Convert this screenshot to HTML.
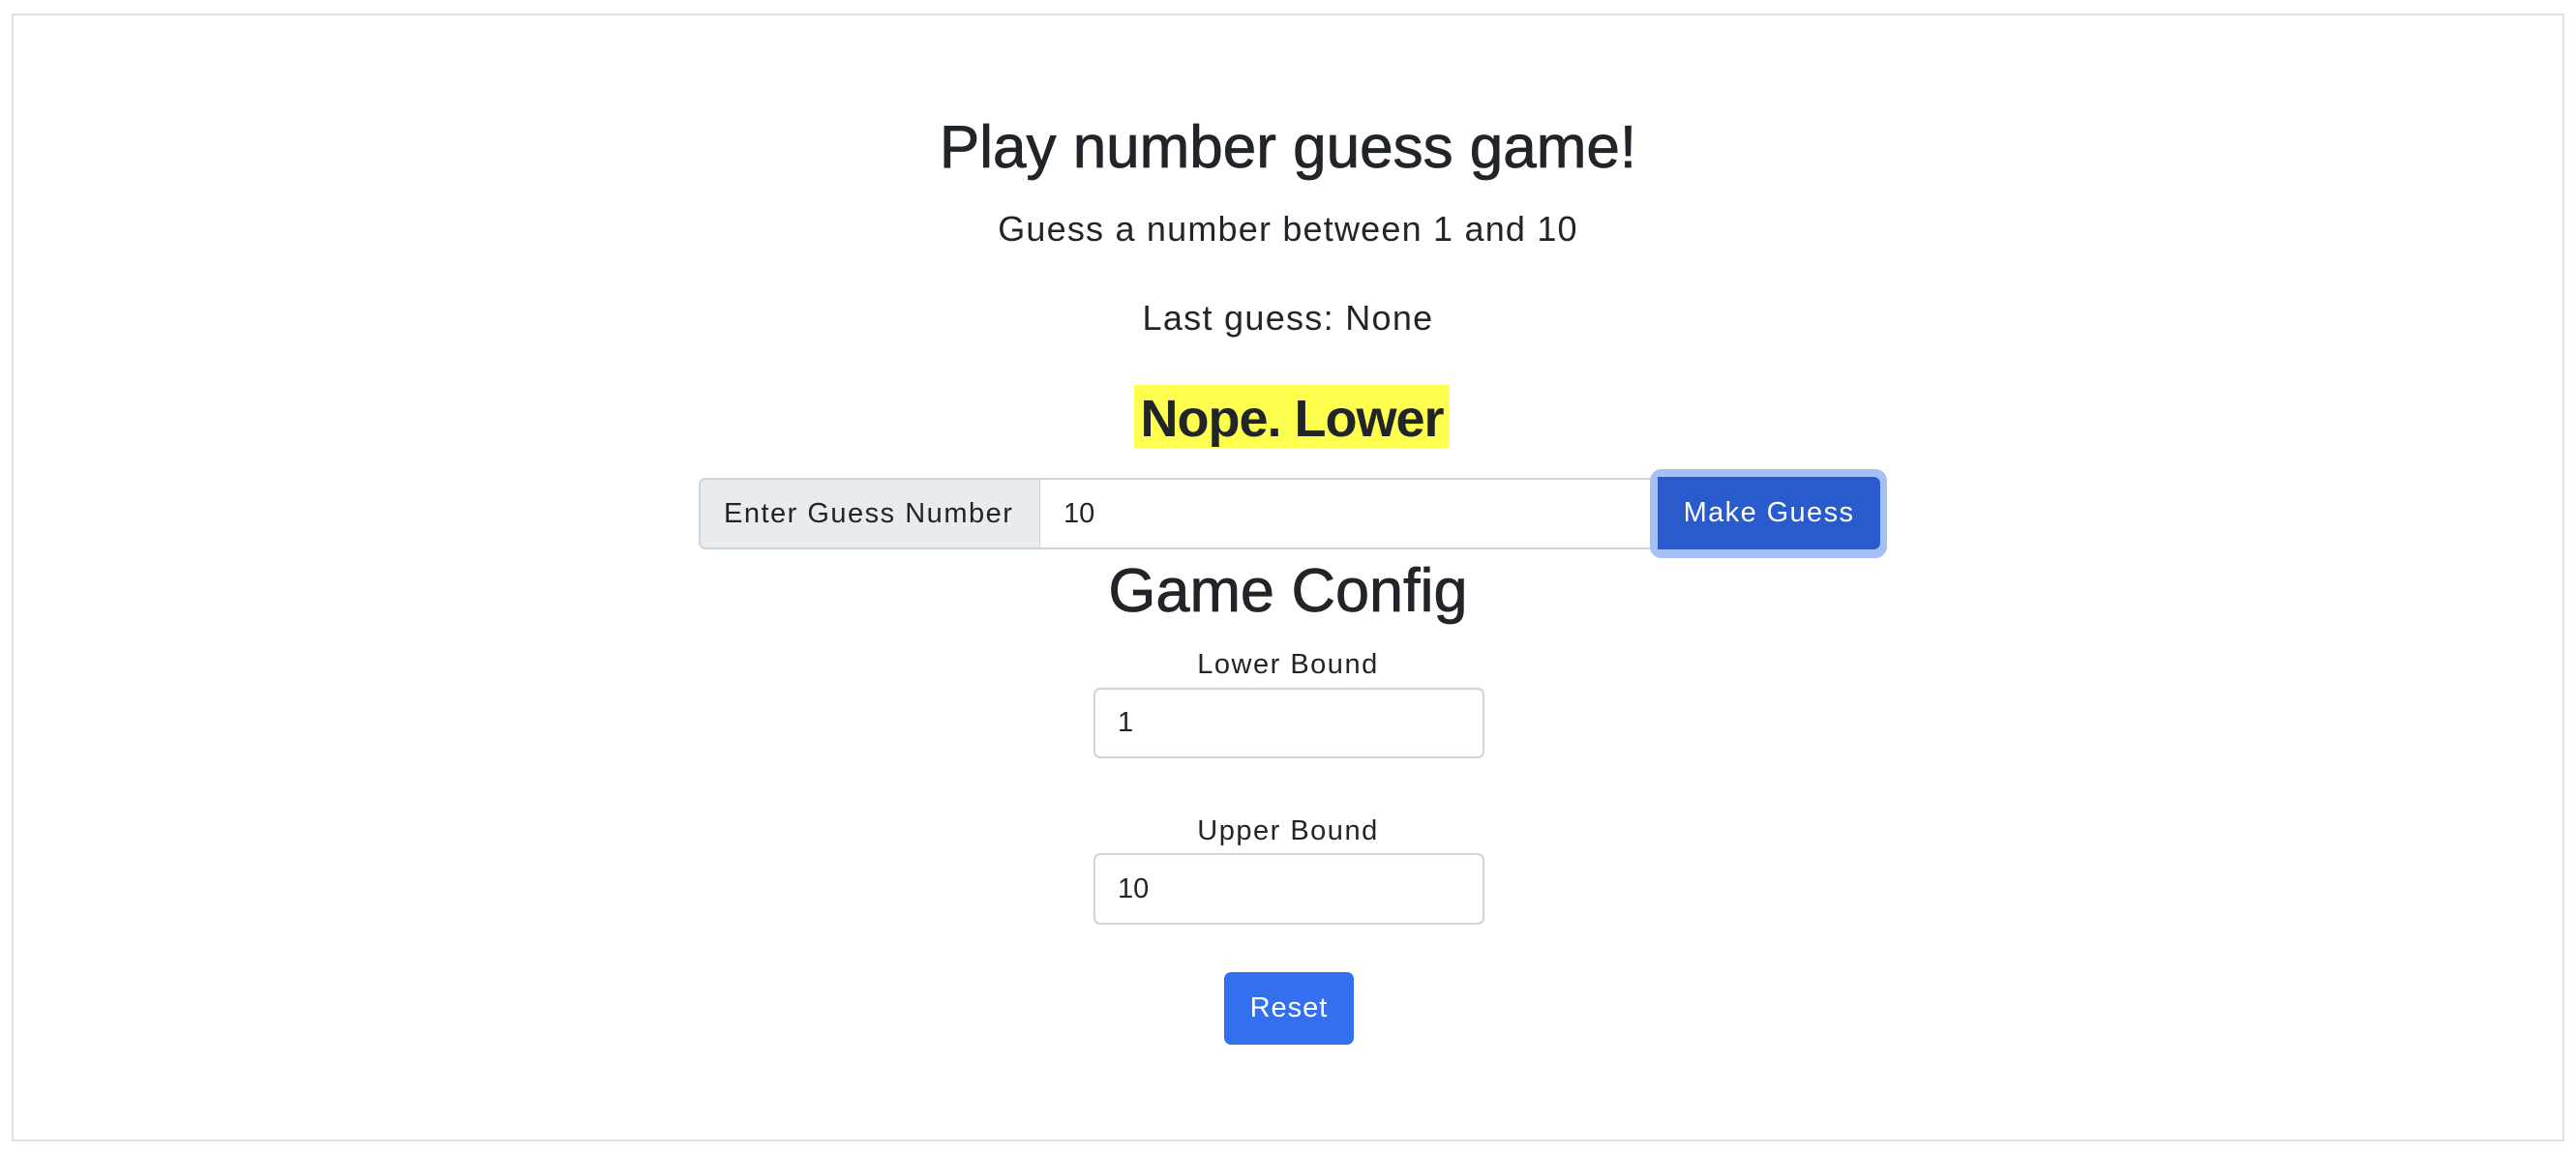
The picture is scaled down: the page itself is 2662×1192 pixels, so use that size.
<!DOCTYPE html>
<html><head><meta charset="utf-8"><style>
*{box-sizing:border-box;margin:0;padding:0}
body{width:2662px;height:1192px;background:#fff;position:relative;overflow:hidden;font-family:"Liberation Sans",Arial,sans-serif;color:#212529}
.frame{position:absolute;left:12px;top:14px;width:2638px;height:1166px;border:2px solid #dee2e6}
.c{position:absolute;left:0;width:2662px;text-align:center;line-height:1;white-space:nowrap}
.box{position:absolute}
.h{-webkit-text-stroke:0.8px #212529}
</style></head><body>
<div class="frame"></div>
<div class="c h" style="top:122px;font-size:62px">Play number guess game!</div>
<div class="c" style="top:219px;font-size:36px;letter-spacing:1.2px">Guess a number between 1 and 10</div>
<div class="c" style="top:311px;font-size:36px;letter-spacing:1.3px">Last guess: None</div>
<div class="box" style="left:1172px;top:398px;width:326px;height:65px;background:#ffff50;font-weight:bold;font-size:54px;line-height:65px;text-align:center;padding-top:3px;letter-spacing:-1px">Nope. Lower</div>

<div class="box" style="left:722px;top:494px;width:354px;height:74px;background:#e9ecef;border:2px solid #ced4da;border-radius:7px 0 0 7px;font-size:29px;letter-spacing:1.5px;line-height:70px;padding-left:24px;white-space:nowrap">Enter Guess Number</div>
<div class="box" style="left:1074px;top:494px;width:645px;height:74px;background:#fff;border:2px solid #ced4da;border-left:1px solid #ced4da;font-size:29px;line-height:70px;padding-left:24px">10</div>
<div class="box" style="left:1705px;top:485px;width:245px;height:92px;background:#a5c0f7;border-radius:12px"></div>
<div class="box" style="left:1713px;top:493px;width:230px;height:75px;background:#2a5bcd;border-radius:0 7px 7px 0;color:#fff;font-size:29px;letter-spacing:1.4px;line-height:75px;text-align:center;white-space:nowrap">Make Guess</div>

<div class="c h" style="top:580px;font-size:63px">Game Config</div>
<div class="c" style="top:673px;font-size:29px;letter-spacing:1.5px">Lower Bound</div>
<div class="box" style="left:1130px;top:711px;width:404px;height:73px;border:2px solid #ced4da;border-radius:7px;font-size:29px;line-height:69px;padding-left:23px">1</div>
<div class="c" style="top:845px;font-size:29px;letter-spacing:1.5px">Upper Bound</div>
<div class="box" style="left:1130px;top:882px;width:404px;height:74px;border:2px solid #ced4da;border-radius:7px;font-size:29px;line-height:70px;padding-left:23px">10</div>
<div class="box" style="left:1265px;top:1005px;width:134px;height:75px;background:#3370f0;border-radius:7px;color:#fff;font-size:29px;letter-spacing:1px;line-height:75px;text-align:center">Reset</div>
</body></html>
